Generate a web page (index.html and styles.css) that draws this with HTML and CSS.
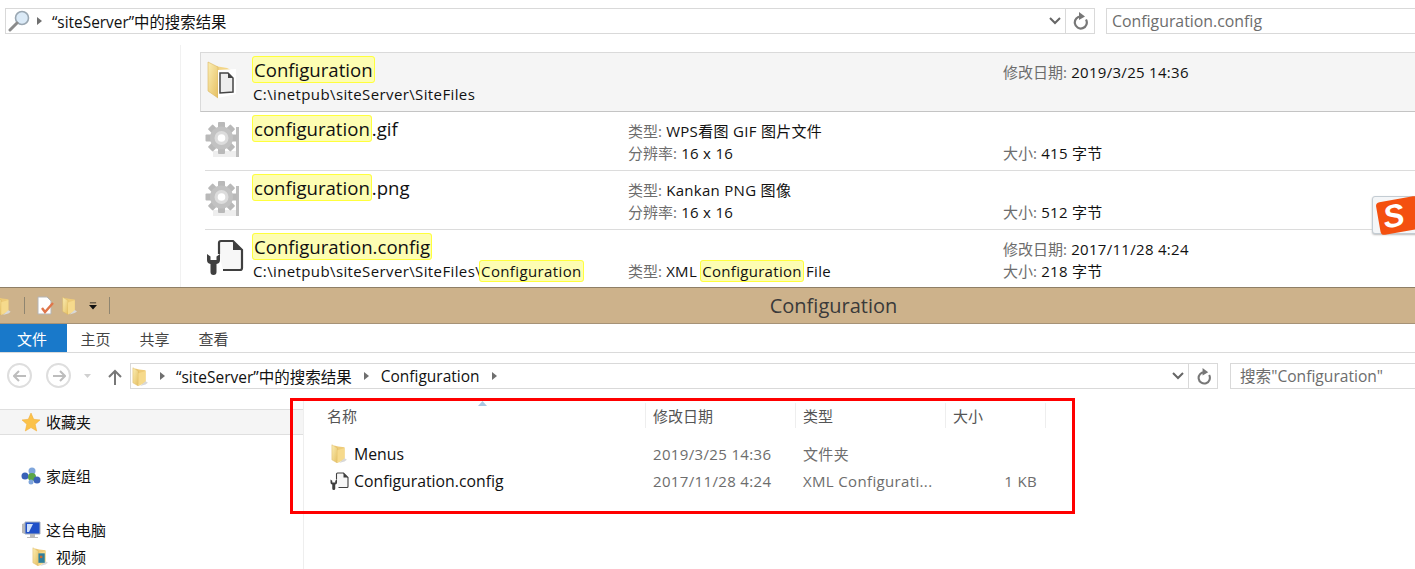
FILE: index.html
```html
<!DOCTYPE html>
<html lang="zh-CN">
<head>
<meta charset="utf-8">
<title>搜索结果</title>
<link rel="stylesheet" href="styles.css">
</head>
<body>
<svg class="defs" width="0" height="0" aria-hidden="true">
  <defs>
    <linearGradient id="fold" x1="0" y1="0" x2="1" y2="1"><stop offset="0" stop-color="#fbeeb4"/><stop offset="1" stop-color="#e5bf62"/></linearGradient>
    <symbol id="gear" viewBox="0 0 36 38">
      <path d="M31 6h3v30H8v-2h23z" fill="#bdbdbd"/>
      <path d="M8 30h23v6H8z" fill="#eee"/>
      <g fill="#b9b9b9">
        <rect x="13" y="1" width="7" height="32" rx="1"/>
        <rect x="13" y="1" width="7" height="32" rx="1" transform="rotate(45 16.500 17)"/>
        <rect x="13" y="1" width="7" height="32" rx="1" transform="rotate(90 16.500 17)"/>
        <rect x="13" y="1" width="7" height="32" rx="1" transform="rotate(135 16.500 17)"/>
      </g>
      <circle cx="16.500" cy="17" r="11.500" fill="#c2c2c2"/>
      <circle cx="16.500" cy="17" r="7" fill="#dcdcdc"/>
      <circle cx="16.500" cy="17" r="3.800" fill="#fff"/>
    </symbol>
    <symbol id="config" viewBox="0 0 38 36">
      <path d="M13 15V4a2 2 0 0 1 2-2h12l9 9v18a2 2 0 0 1-2 2H17" fill="#f7f7f7" stroke="#3f3f3f" stroke-width="2.200"/>
      <path d="M27 2v9h9z" fill="#3f3f3f"/>
      <path d="M1 15v6a4 4 0 0 0 3.500 4v8a3 3 0 0 0 6 0v-8a4 4 0 0 0 3.500-4v-6l-3.500 2.500V21h-6v-3.500z" fill="#3f3f3f"/>
    </symbol>
    <symbol id="folder" viewBox="0 0 20 24">
      <path d="M4 2l5 1 8 1v16l-11 2z" fill="#eecb78"/>
      <path d="M1 1l7 4v19l-7-4z" fill="url(#fold)" stroke="#dcb75f" stroke-width=".6"/>
      <path d="M8 8l9-3v15l-9 4z" fill="#f6da8c"/>
      <path d="M17 18l3 2-3 2-7 2z" fill="#d8d8d8"/>
    </symbol>
  </defs>
</svg>

<section class="results">
  <div class="bar">
    <div class="addr">
      <svg class="mag" width="24" height="22" viewBox="0 0 24 22"><circle cx="15" cy="8" r="6.500" fill="#dbeaf7" stroke="#9aa7b2" stroke-width="1.600"/><path d="M10 13l-7 7" stroke="#8b8b8b" stroke-width="3" stroke-linecap="round"/></svg>
      <span class="tri"></span>
      <span class="crumb">“siteServer”中的搜索结果</span>
      <span class="chev"><svg width="12" height="8" viewBox="0 0 12 8"><path d="M1 1l5 5 5-5" fill="none" stroke="#666" stroke-width="2"/></svg></span>
      <span class="refresh"><svg width="16" height="18" viewBox="0 0 16 18"><path d="M9 4.500a6 6 0 1 0 5 3" fill="none" stroke="#777" stroke-width="2.200"/><path d="M7 0l6 4.500L7 8z" fill="#777"/></svg></span>
    </div>
    <div class="search">Configuration.config</div>
  </div>

  <div class="list">
    <article class="item item-first">
      <svg class="ic" width="30" height="40" viewBox="0 0 30 40"><path d="M2 5l18 3 6 3v22H8l-6-1z" fill="#f2d588"/><path d="M1 2l10 5v31l-10-7z" fill="url(#fold)" stroke="#dcb75f" stroke-width=".6"/><path d="M11 10l18-1v25l-18 4z" fill="#fff"/><path d="M13 13h8l5 5v14l-13 1z" fill="#ededed" stroke="#444" stroke-width="1.500"/><path d="M21 13v5h5z" fill="#444"/></svg>
      <div class="names">
        <div class="nm"><mark>Configuration</mark></div>
        <div class="path">C:\inetpub\siteServer\SiteFiles</div>
      </div>
      <div class="c2"></div>
      <div class="c3"><div><i>修改日期:</i> 2019/3/25 14:36</div><div>&nbsp;</div></div>
    </article>
    <article class="item">
      <svg class="ic" width="36" height="38"><use href="#gear"/></svg>
      <div class="names"><div class="nm"><mark>configuration</mark>.gif</div></div>
      <div class="c2"><div><i>类型:</i> WPS看图 GIF 图片文件</div><div><i>分辨率:</i> 16 x 16</div></div>
      <div class="c3"><div>&nbsp;</div><div><i>大小:</i> 415 字节</div></div>
    </article>
    <article class="item">
      <svg class="ic" width="36" height="38"><use href="#gear"/></svg>
      <div class="names"><div class="nm"><mark>configuration</mark>.png</div></div>
      <div class="c2"><div><i>类型:</i> Kankan PNG 图像</div><div><i>分辨率:</i> 16 x 16</div></div>
      <div class="c3"><div>&nbsp;</div><div><i>大小:</i> 512 字节</div></div>
    </article>
    <article class="item">
      <svg class="ic" width="38" height="36"><use href="#config"/></svg>
      <div class="names">
        <div class="nm"><mark>Configuration.config</mark></div>
        <div class="path">C:\inetpub\siteServer\SiteFiles\<mark>Configuration</mark></div>
      </div>
      <div class="c2"><div>&nbsp;</div><div><i>类型:</i> XML <mark>Configuration</mark> File</div></div>
      <div class="c3"><div><i>修改日期:</i> 2017/11/28 4:24</div><div><i>大小:</i> 218 字节</div></div>
    </article>
  </div>
  <div class="ime"><span class="ime-s">S</span></div>
</section>

<section class="explorer">
  <header class="title">
    <div class="qat">
      <svg class="q1" width="12" height="19" viewBox="8 0 12 24"><use href="#folder" width="20" height="24"/></svg>
      <span class="qsep"></span>
      <svg class="q2" width="18" height="19" viewBox="0 0 18 19"><path d="M2 1h9l4 4v13H2z" fill="#fff" stroke="#b5b5b5"/><path d="M6 12l3 4 8-9" fill="none" stroke="#e0764a" stroke-width="2.400"/></svg>
      <svg class="q3" width="15" height="19"><use href="#folder"/></svg>
      <svg class="qdrop" width="8" height="8" viewBox="0 0 9 8"><path d="M1 0h7v1H1zM0 3h9L4.500 8z" fill="#111"/></svg>
      <span class="qsep qsep-end"></span>
    </div>
    <div class="title-text">Configuration</div>
  </header>
  <nav class="tabs">
    <span class="tab tab-on">文件</span><span class="tab">主页</span><span class="tab">共享</span><span class="tab">查看</span>
  </nav>
  <div class="navbar">
    <span class="circ"><svg width="14" height="12" viewBox="0 0 14 12"><path d="M13 6H2M6 1L1 6l5 5" fill="none" stroke="#bdbdbd" stroke-width="2"/></svg></span>
    <span class="circ"><svg width="14" height="12" viewBox="0 0 14 12"><path d="M1 6h11M8 1l5 5-5 5" fill="none" stroke="#bdbdbd" stroke-width="2"/></svg></span>
    <svg class="down" width="7" height="4" viewBox="0 0 7 4"><path d="M0 0h7L3.500 4z" fill="#d0d0d0"/></svg>
    <svg class="up" width="14" height="16" viewBox="0 0 14 16"><path d="M7 16V2M1 8l6-6 6 6" fill="none" stroke="#777" stroke-width="2"/></svg>
    <div class="addr2">
      <svg class="f2" width="16" height="19"><use href="#folder"/></svg>
      <span class="tri"></span>
      <span class="crumb2">“siteServer”中的搜索结果</span>
      <span class="tri tri-d"></span>
      <span class="crumb2">Configuration</span>
      <span class="tri tri-d"></span>
      <span class="chev"><svg width="12" height="8" viewBox="0 0 12 8"><path d="M1 1l5 5 5-5" fill="none" stroke="#666" stroke-width="2"/></svg></span>
      <span class="refresh2"><svg width="15" height="17" viewBox="0 0 16 18"><path d="M9 4.500a6 6 0 1 0 5 3" fill="none" stroke="#777" stroke-width="2.200"/><path d="M7 0l6 4.500L7 8z" fill="#777"/></svg></span>
    </div>
    <div class="search2">搜索"Configuration"</div>
  </div>
  <div class="body">
    <aside class="side">
      <div class="tree tree-fav">
        <svg width="18" height="19" viewBox="0 0 18 19"><path d="M9 0l2.700 6.300 6.300.6-4.800 4.400 1.500 6.700L9 14.600 3.300 18l1.500-6.700L0 6.900l6.300-.6z" fill="#fbc24a" stroke="#f0a92e" stroke-width=".5"/></svg>
        <span>收藏夹</span>
      </div>
      <div class="tree tree-home">
        <svg width="20" height="18" viewBox="0 0 20 18"><circle cx="4" cy="9" r="3.500" fill="#3a62b8"/><circle cx="11" cy="4" r="3.500" fill="#7fa6dc"/><circle cx="11" cy="10" r="4" fill="#5aa548"/><circle cx="16" cy="13" r="3.500" fill="#3a62b8"/><circle cx="10" cy="15" r="2.500" fill="#7fa6dc"/></svg>
        <span>家庭组</span>
      </div>
      <div class="tree tree-pc">
        <svg width="20" height="18" viewBox="0 0 20 18"><path d="M1 3l3-1v11l-3-1z" fill="#b9b9b9"/><path d="M4 1h15v12H4z" fill="#1f50c8" stroke="#a8b0bd"/><path d="M6 3l6 0-4 8H6z" fill="#cfe0fa"/><path d="M9 13h5v3h3v1H6v-1h3z" fill="#bbb"/></svg>
        <span>这台电脑</span>
      </div>
      <div class="tree tree-video">
        <svg width="16" height="19" viewBox="0 0 20 24"><use href="#folder" width="20" height="24"/><rect x="8" y="8" width="8" height="12" fill="#2e7f9b"/><rect x="10" y="11" width="3" height="3" fill="#c96a2e"/></svg>
        <span>视频</span>
      </div>
    </aside>
    <main class="files">
      <svg class="sort" width="9" height="5" viewBox="0 0 9 5"><path d="M4.500 0L9 5H0z" fill="#a9c9e3"/></svg>
      <div class="row head">
        <div class="col-name">名称</div><div class="col-date">修改日期</div><div class="col-type">类型</div><div class="col-size">大小</div>
      </div>
      <div class="row file file-first">
        <div class="col-name"><svg width="18" height="19"><use href="#folder"/></svg><span>Menus</span></div>
        <div class="col-date">2019/3/25 14:36</div><div class="col-type">文件夹</div><div class="col-size"></div>
      </div>
      <div class="row file">
        <div class="col-name"><svg class="cfg-small" width="19" height="18"><use href="#config"/></svg><span>Configuration.config</span></div>
        <div class="col-date">2017/11/28 4:24</div><div class="col-type">XML Configurati...</div><div class="col-size num">1 KB</div>
      </div>
    </main>
    <div class="callout"></div>
  </div>
</section>
</body>
</html>
```
FILE: styles.css
```css
* { box-sizing: border-box; }
html, body { margin: 0; padding: 0; }
body {
  width: 1415px; height: 569px; overflow: hidden; background: #fff; color: #111;
  font-family: "Open Sans", "Noto Sans CJK SC", sans-serif; font-size: 15px;
}
.defs { position: absolute; }
i { font-style: normal; color: #6d6d6d; letter-spacing: 0; }
svg { display: block; flex: none; }

.results { position: relative; height: 287px; padding-top: 8px; overflow: hidden; }
.bar { display: flex; padding-left: 5px; height: 26px; }
.addr { width: 1090px; display: flex; align-items: center; border: 1px solid #d9d9d9; }
.mag { margin-left: 1px; }
.tri { width: 0; height: 0; border-left: 5px solid #6f6f6f; border-top: 4px solid transparent; border-bottom: 4px solid transparent; margin-left: 6px; }
.crumb { margin-left: 10px; font-size: 15.400px; flex: 1; }
.chev { width: 20px; display: flex; justify-content: center; }
.refresh { width: 29px; height: 24px; border-left: 1px solid #d9d9d9; display: flex; align-items: center; justify-content: center; }
.search {
  margin-left: 11px; flex: 1; border: 1px solid #d9d9d9; border-right: 0; padding-left: 5px;
  line-height: 24px; color: #6d6d6d; font-size: 15.850px;
}
.list { margin: 11px 0 0 180px; padding: 7px 0 0 19px; border-left: 1px solid #f1f1f1; height: 242px; }
.item { display: flex; height: 59px; border-bottom: 1px solid #dcdcdc; margin-left: 5px; position: relative; }
.item-first { height: 60px; margin-left: 0; background: #f5f5f5; border: 1px solid #dadada; border-bottom-color: #c4c4c4; border-right: 0; }
.ic { position: absolute; left: 0; top: 9px; }
.item-first .ic { top: 7px; left: 6px; }
.item:last-child .ic { top: 9px; left: 1px; }
.names { margin-left: 47px; width: 376px; flex: none; padding-top: 5px; }
.item-first .names { margin-left: 51px; }
.nm { font-size: 18.600px; line-height: 24px; height: 24px; }
.path { font-size: 15px; letter-spacing: .38px; line-height: 20px; margin-top: 2px; padding-left: 1px; }
mark { background: #fdfdb2; color: inherit; border: 1px solid #ffff3c; border-radius: 3px; padding: 0 1px; }
.path mark { margin-left: -2px; }
.c2 mark { margin: 0 -2px 0 -1px; }
.c2, .c3 { padding-top: 8px; line-height: 22px; font-size: 15px; letter-spacing: .3px; }
.c2 { width: 375px; flex: none; }
.c3 { flex: 1; }
.ime {
  position: absolute; left: 1372px; top: 196px; width: 50px; height: 38px; background: #f4f6f8;
  border: 1px solid #c3ccd3; border-radius: 3px; box-shadow: 0 1px 2px #bbb;
}
.ime-s {
  position: absolute; left: 5px; top: 2px; width: 42px; height: 33px; background: #f4500f; color: #fff; border-radius: 4px;
  font: italic 700 32px/33px "Liberation Sans", sans-serif; text-align: left; padding-left: 5px; transform: rotate(-10deg);
}

.explorer { position: relative; height: 282px; }
.title {
  height: 37px; background: #cdb28b; border-top: 1px solid #8f7f66; border-bottom: 1px solid #a69277;
  position: relative; display: flex; align-items: center; justify-content: center;
}
.qat { position: absolute; left: 0; top: 8px; display: flex; align-items: center; }
.qsep { width: 1px; height: 17px; background: #8f8570; margin-left: 12px; }
.q2 { margin-left: 11px; }
.q3 { margin-left: 8px; }
.qdrop { margin-left: 12px; }
.qsep-end { margin-left: 12px; }
.title-text { font-size: 20px; margin-left: 252px; color: #3a3a3a; }
.tabs { height: 29px; display: flex; border-bottom: 1px solid #dadada; }
.tab { width: 59px; text-align: center; line-height: 30px; font-size: 15px; color: #444; }
.tab-on { width: 67px; padding-right: 3px; background: #1979ca; color: #fff; }
.tab-on + .tab { margin-left: -1px; }
.navbar { height: 47px; display: flex; align-items: flex-start; padding: 10px 0 0 7px; position: relative; }
.circ { width: 25px; height: 25px; border: 2px solid #dedede; border-radius: 50%; display: flex; align-items: center; justify-content: center; margin-right: 14px; }
.down { margin: 11px 0 0 -1px; }
.up { margin: 6px 0 0 17px; }
.addr2 { margin-left: 8px; width: 1088px; height: 26px; border: 1px solid #d9d9d9; display: flex; align-items: center; padding-left: 1px; }
.addr2 > .tri { margin-left: 12px; }
.crumb2 { font-size: 15.500px; margin-left: 11px; }
.tri-d + .crumb2 { margin-left: 12px; }
.addr2 .chev { margin-left: auto; }
.refresh2 { width: 29px; height: 24px; border-left: 1px solid #d9d9d9; display: flex; align-items: center; justify-content: center; }
.search2 { margin-left: 12px; flex: 1; height: 26px; border: 1px solid #d9d9d9; border-right: 0; padding-left: 9px; line-height: 25px; color: #6d6d6d; font-size: 15.600px; }

.body { display: flex; height: 169px; position: relative; }
.side { width: 304px; flex: none; border-right: 1px solid #eee; font-size: 15px; }
.tree { display: flex; align-items: center; gap: 6px; height: 26px; padding-left: 21px; }
.tree > span { margin-bottom: 2px; }
.tree-fav { margin-top: 9px; background: #f5f5f5; border-top: 1px solid #dfdfdf; border-bottom: 1px solid #dfdfdf; padding-left: 22px; }
.tree-home { margin-top: 28px; gap: 5px; }
.tree-pc { margin-top: 28px; gap: 5px; }
.tree-video { padding-left: 32px; gap: 8px; }
.tree-video > span { margin-bottom: 0; }
.files { flex: 1; padding-top: 3px; position: relative; }
.sort { position: absolute; left: 174px; top: 1px; }
.row { display: grid; grid-template-columns: 342px 150px 150px 100px; align-items: center; font-size: 15px; }
.head { height: 25px; color: #555; }
.head > div { height: 25px; line-height: 26px; border-right: 1px solid #eee; padding-left: 7px; }
.head .col-name { padding-left: 23px; }
.file { height: 27px; color: #6d6d6d; letter-spacing: .35px; }
.file-first { margin-top: 12px; }
.file .col-name { display: flex; align-items: center; gap: 6px; padding-left: 26px; color: #111; font-size: 15.800px; letter-spacing: 0; }
.file .cfg-small { margin-right: -1px; }
.file .col-date, .file .col-type { padding-left: 7px; }
.num { text-align: right; padding-right: 9px; }
.callout { position: absolute; left: 290px; top: -2px; width: 785px; height: 116px; border: 3px solid #f00; }
```
